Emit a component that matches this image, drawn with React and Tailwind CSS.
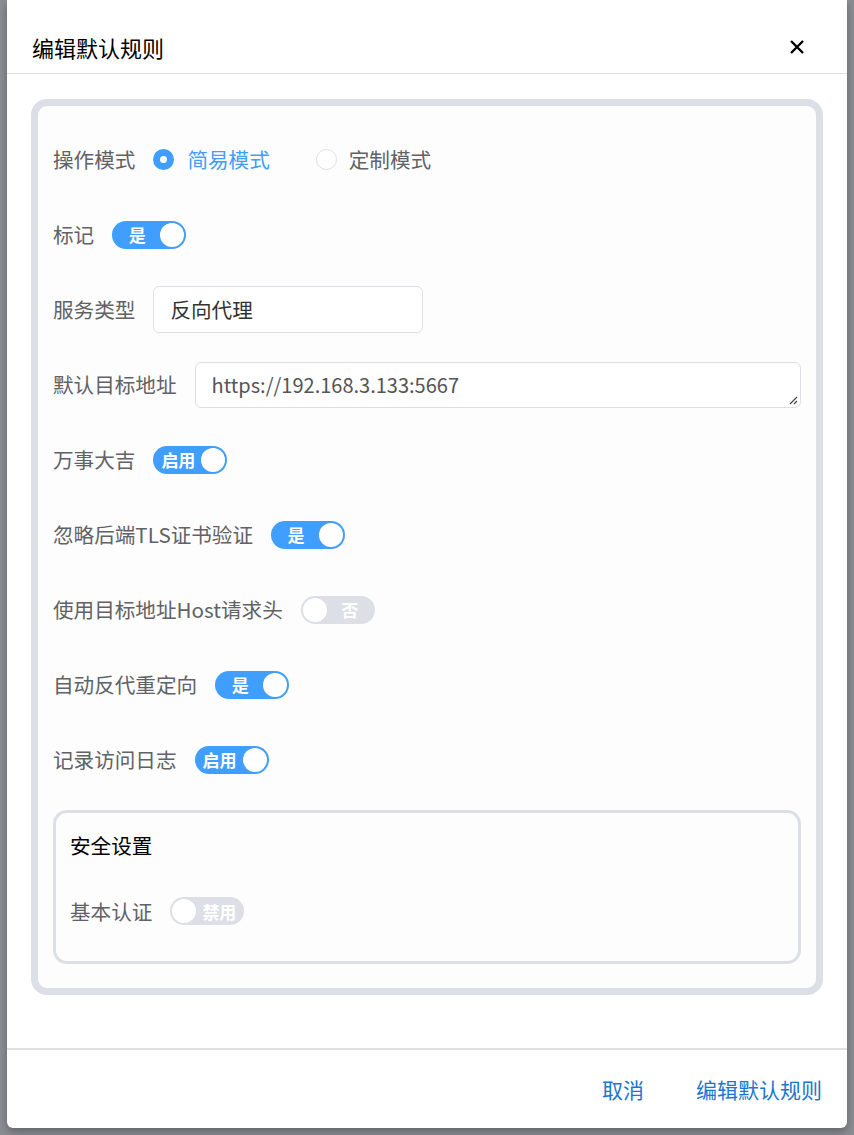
import React from "react";

const font = { fontFamily: '"Noto Sans CJK SC", "Noto Sans", sans-serif' };

const Toggle = ({ on, text }) => (
  <div
    className={`flex items-center h-[28px] w-[74px] rounded-full px-[2px] ${
      on ? "bg-[#409eff] flex-row" : "bg-[#dcdfe6] flex-row-reverse"
    }`}
  >
    <span className="flex-1 text-center text-white text-[17px] font-bold leading-none">
      {text}
    </span>
    <span className="w-[24px] h-[24px] rounded-full bg-white" />
  </div>
);

const Row = ({ label, children }) => (
  <div className="flex items-center h-[47px] gap-[18px]">
    <span className="text-[20.6px] text-[#606266] whitespace-nowrap">{label}</span>
    {children}
  </div>
);

export default function App() {
  return (
    <div
      className="relative w-[854px] h-[1135px] overflow-hidden bg-[#8b8e93] px-[7px]"
      style={font}
    >
      <div className="flex flex-col w-[840px] h-[1128px] bg-white rounded-b-[6px] shadow-[0_4px_10px_rgba(0,0,0,0.3)]">
        {/* header */}
        <div className="flex items-center justify-between pl-[25px] pr-[42px] pt-[30px] pb-[9px] border-b border-[#e0e0e0]">
          <span className="text-[22px] leading-[34px] text-black">编辑默认规则</span>
          <svg width="16" height="16" viewBox="0 0 16 16">
            <path d="M2 2 L14 14 M14 2 L2 14" stroke="#000" strokeWidth="2.4" />
          </svg>
        </div>

        {/* body */}
        <div className="flex-1 px-[24px] pt-[25px]">
          <div className="h-[896px] border-[7px] border-[#dcdfe6] rounded-[16px] bg-[#fdfdfd] px-[15px] pt-[30px] flex flex-col">
            <div className="flex flex-col gap-[28px]">
              <Row label="操作模式">
                <div className="flex items-center">
                  <span className="w-[21px] h-[21px] rounded-full bg-[#409eff] flex items-center justify-center">
                    <span className="w-[7px] h-[7px] rounded-full bg-white" />
                  </span>
                  <span className="ml-[13px] text-[20.6px] text-[#409eff]">简易模式</span>
                  <span className="ml-[46px] w-[21px] h-[21px] rounded-full border border-[#dcdfe6] bg-white" />
                  <span className="ml-[12px] text-[20.6px] text-[#606266]">定制模式</span>
                </div>
              </Row>
              <Row label="标记">
                <Toggle on text="是" />
              </Row>
              <Row label="服务类型">
                <div className="w-[270px] h-[47px] border border-[#dcdfe6] rounded-[6px] bg-white flex items-center px-[16px] text-[20.6px] text-[#333]">
                  反向代理
                </div>
              </Row>
              <Row label="默认目标地址">
                <div className="relative flex-1 h-[46px] border border-[#dcdfe6] rounded-[6px] bg-white flex items-center px-[16px] text-[20px] text-[#555]">
                  https://192.168.3.133:5667
                  <svg className="absolute right-[2px] bottom-[2px]" width="10" height="10" viewBox="0 0 10 10">
                    <path d="M9 2 L2 9 M9 6 L6 9" stroke="#444" strokeWidth="1.2" />
                  </svg>
                </div>
              </Row>
              <Row label="万事大吉">
                <Toggle on text="启用" />
              </Row>
              <Row label="忽略后端TLS证书验证">
                <Toggle on text="是" />
              </Row>
              <Row label="使用目标地址Host请求头">
                <Toggle text="否" />
              </Row>
              <Row label="自动反代重定向">
                <Toggle on text="是" />
              </Row>
              <Row label="记录访问日志">
                <Toggle on text="启用" />
              </Row>
            </div>

            <div className="mt-[27px] h-[154px] border-[3px] border-[#dcdfe6] rounded-[14px] px-[14px] pt-[17px]">
              <div className="text-[20.6px] leading-[30px] text-black">安全设置</div>
              <div className="mt-[36px] flex items-center gap-[18px]">
                <span className="text-[20.6px] text-[#606266]">基本认证</span>
                <Toggle text="禁用" />
              </div>
            </div>
          </div>
        </div>

        {/* footer */}
        <div className="h-[80px] border-t-2 border-[#e0e0e0] flex items-center justify-end gap-[52px] pr-[25px] pt-[2px]">
          <span className="text-[21px] text-[#1976d2]">取消</span>
          <span className="text-[21px] text-[#1976d2]">编辑默认规则</span>
        </div>
      </div>
    </div>
  );
}
